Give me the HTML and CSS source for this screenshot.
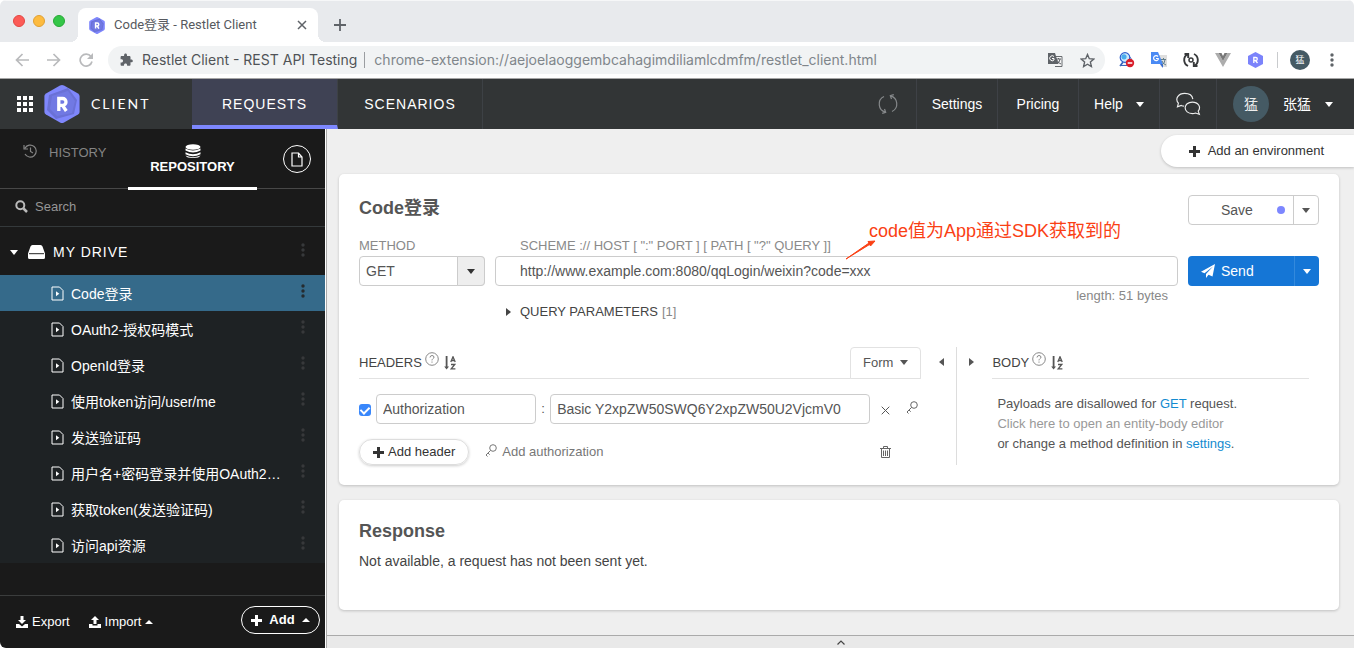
FILE: index.html
```html
<!DOCTYPE html>
<html lang="zh-CN">
<head>
<meta charset="utf-8">
<title>Code登录 - Restlet Client</title>
<link rel="stylesheet" href="styles.css">
</head>
<body>
<svg class="defs" aria-hidden="true">
  <symbol id="plus" viewBox="0 0 11 11"><path d="M4 0h3v4h4v3H7v4H4V7H0V4h4z" fill="currentColor"/></symbol>
  <symbol id="logo" viewBox="0 0 36 38"><path d="M16 .6Q18 -.4 20 .6L34 8.500Q35.600 9.500 35.600 11V27Q35.600 28.500 34 29.500L20 37.400Q18 38.400 16 37.400L2 29.500Q.4 28.500 .4 27V11Q.4 9.500 2 8.500Z" fill="#7f87fc"/><path d="M5 10L24 3L33 15L30 29L12 34L3 25Z" fill="#6a71d6"/><path d="M8 11L24 6L31 16L28 28L13 31L6 24Z" fill="#7179e3"/><path d="M14.800 26V13.500h3.800a3.300 3.300 0 0 1 0 6.800H15M18.500 20.300L22.300 26" fill="none" stroke="#fff" stroke-width="3.300"/></symbol>
  <symbol id="file" viewBox="0 0 13 15"><path d="M1 1h7.500L12 4.500V14H1z" fill="none" stroke="currentColor"/><path d="M5 5.300v5L8.300 7.800z" fill="currentColor"/></symbol>
  <symbol id="dots" viewBox="0 0 4 14"><g fill="currentColor"><circle cx="2" cy="2" r="1.700"/><circle cx="2" cy="7" r="1.700"/><circle cx="2" cy="12" r="1.700"/></g></symbol>
  <symbol id="key" viewBox="0 0 12 13"><g fill="none" stroke="currentColor"><circle cx="8" cy="4" r="3.300"/><path d="M5.600 6.400L1 11l1.500 1.500M3 9l1.700 1.700"/></g></symbol>
  <symbol id="help" viewBox="0 0 14 14"><circle cx="7" cy="7" r="6.300" fill="none" stroke="currentColor"/><path d="M5 5.500q.2-2 2-2t2 1.600c0 1.500-2 1.500-2 3.300M7 9.500v1.200" fill="none" stroke="currentColor"/></symbol>
  <symbol id="sort" viewBox="0 0 12 14"><path d="M1.700 0h1.800v10.500H5L2.600 13.500.2 10.500h1.500z" fill="currentColor"/><path d="M6.800 6L9 .8 11.200 6M7.500 4.500h3M7 8.500h3.800L7.200 12.800h4.200" fill="none" stroke="currentColor" stroke-width="1.300"/></symbol>
  <symbol id="translate" viewBox="0 0 16 16"><path d="M6.500 4.500H15v10H8" fill="#f6f6f6" stroke="#686c70"/><path d="M1 1h7l3.500 11H1z" fill="#5f6368"/><path d="M7 4.500A2.500 2.500 0 1 0 7 8V6.500H5" fill="none" stroke="#fff"/><path d="M9 7h5M11.500 6v1M10 12q3-2 3-5M10.500 8.500Q11 11 14 12" fill="none" stroke="#5f6368"/></symbol>
</svg>

<div class="window">
  <div class="tabstrip">
    <div class="lights"><i class="red"></i><i class="amber"></i><i class="green"></i></div>
    <div class="tab">
      <svg width="16" height="17"><use href="#logo"/></svg>
      <span class="tab-title">Code登录 - Restlet Client</span>
      <button class="icon-btn" aria-label="Close tab"><svg width="10" height="10" viewBox="0 0 10 10"><path d="M1 1l8 8M9 1L1 9" stroke="#5f6368" stroke-width="1.500"/></svg></button>
    </div>
    <button class="icon-btn new-tab" aria-label="New tab"><svg width="12" height="12" viewBox="0 0 12 12"><path d="M6 0v12M0 6h12" stroke="#5f6368" stroke-width="1.800"/></svg></button>
  </div>

  <div class="toolbar">
    <div class="slots">
      <button class="icon-btn slot" aria-label="Back"><svg width="14" height="14" viewBox="0 0 14 14"><path d="M14 7H1.500M7.500 1l-6 6 6 6" fill="none" stroke="#b9babc" stroke-width="1.700"/></svg></button>
      <button class="icon-btn slot" aria-label="Forward"><svg width="14" height="14" viewBox="0 0 14 14"><path d="M0 7h12.500M6.500 1l6 6-6 6" fill="none" stroke="#b9babc" stroke-width="1.700"/></svg></button>
      <button class="icon-btn slot" aria-label="Reload"><svg width="14" height="14" viewBox="0 0 14 14"><path d="M12 3.500A6 6 0 1 0 13 8.500" fill="none" stroke="#b9babc" stroke-width="1.700"/><path d="M14 0v6H8z" fill="#b9babc"/></svg></button>
    </div>
    <div class="omnibox">
      <svg width="14" height="14" viewBox="1 0 24 24"><path d="M20.500 11H19V7c0-1.100-.9-2-2-2h-4V3.500C13 2.120 11.880 1 10.500 1S8 2.120 8 3.500V5H4c-1.100 0-1.990.9-1.990 2v3.800H3.500c1.490 0 2.700 1.210 2.700 2.700s-1.210 2.700-2.700 2.700H2V20c0 1.100.9 2 2 2h3.800v-1.500c0-1.490 1.210-2.700 2.700-2.700s2.700 1.210 2.700 2.700V22H17c1.100 0 2-.9 2-2v-4h1.500c1.380 0 2.500-1.120 2.500-2.500S21.880 11 20.500 11z" fill="#5f6368"/></svg>
      <span class="site">Restlet Client - REST API Testing</span>
      <span class="url">chrome-extension://aejoelaoggembcahagimdiliamlcdmfm/restlet_client.html</span>
      <div class="slots">
        <button class="icon-btn slot" aria-label="Translate page"><svg width="16" height="16"><use href="#translate"/></svg></button>
        <button class="icon-btn slot" aria-label="Bookmark"><svg width="15" height="15" viewBox="0 0 15 15"><path d="M7.500 1.500l1.800 4.200 4.500.4-3.400 3 1 4.400-3.900-2.300-3.900 2.300 1-4.400-3.400-3 4.500-.4z" fill="none" stroke="#5f6368" stroke-width="1.400"/></svg></button>
      </div>
    </div>
    <div class="slots">
      <button class="icon-btn slot" aria-label="Proxy extension"><svg width="16" height="16" viewBox="0 0 16 16"><path d="M8 1.500l4 5v7H2z" fill="#e9f3fb" stroke="#3b66bc"/><circle cx="6" cy="5.500" r="4.800" fill="#cdeafa" stroke="#2f5fd0" stroke-width="1.200"/><circle cx="5" cy="4.800" r="2.600" fill="#4aaced"/><path d="M1 14l3-4" stroke="#3b66bc" stroke-width="1.500"/><circle cx="11" cy="11" r="4.200" fill="#d91d2a"/><path d="M8.700 11h4.600" stroke="#fff" stroke-width="1.500"/></svg></button>
      <button class="icon-btn slot" aria-label="Google Translate"><svg width="17" height="16" viewBox="0 0 17 16"><path d="M6 3h10v12h-6z" fill="#dedede"/><path d="M9 12l3 4 0-4z" fill="#3367d6"/><path d="M0 0h7l5 12H0z" fill="#4a8af4"/><path d="M7 4.500A2.500 2.500 0 1 0 7.200 7.500V6.500H5" fill="none" stroke="#fff" stroke-width="1.200"/><path d="M10 7.500h5M12.500 6v1.500M11 13q3-2 3-5.500M11 9q1 3 4 4" fill="none" stroke="#607d8b"/></svg></button>
      <button class="icon-btn slot" aria-label="Refresh extension"><svg width="16" height="16" viewBox="0 0 16 16"><path d="M5 14A6.600 6.600 0 0 1 4.500 2.300M1.500 2H5.200v4M11 2A6.600 6.600 0 0 1 11.500 13.700M14.500 14h-3.700v-4" fill="none" stroke="#37393b" stroke-width="1.900"/><circle cx="8" cy="8" r="2" fill="none" stroke="#37393b" stroke-width="1.500"/></svg></button>
      <button class="icon-btn slot" aria-label="Vue devtools"><svg width="16" height="14" viewBox="0 0 16 14"><path d="M0 0h3.500L8 8l4.500-8H16L8 14z" fill="#adadad"/><path d="M3.500 0h3L8 3l1.500-3h3L8 8z" fill="#777"/></svg></button>
      <button class="icon-btn slot" aria-label="Restlet Client"><svg width="15" height="16" viewBox="0 0 15 16"><path d="M7.500 0L15 4v8l-7.500 4L0 12V4z" fill="#7b83fb"/><path d="M5.800 11V5.500h2a1.500 1.500 0 0 1 0 3H6M7.500 8.500L9.500 11" fill="none" stroke="#fff" stroke-width="1.300"/></svg></button>
    </div>
    <i class="bar-sep"></i>
    <div class="slots">
      <button class="icon-btn slot" aria-label="Profile"><span class="mini-avatar">猛</span></button>
      <button class="icon-btn slot menu" aria-label="Browser menu"><svg width="4" height="14"><use href="#dots"/></svg></button>
    </div>
  </div>

  <header class="app-header">
    <div class="brand">
      <svg width="16" height="16" viewBox="0 0 16 16"><path d="M0 2h16M0 8h16M0 14h16" stroke="#fff" stroke-width="4" stroke-dasharray="4 2"/></svg>
      <svg width="36" height="38"><use href="#logo"/></svg>
      <span>CLIENT</span>
    </div>
    <nav class="nav"><a class="nav-link active" href="#requests">REQUESTS</a><a class="nav-link" href="#scenarios">SCENARIOS</a></nav>
    <button class="head-item sync" aria-label="Sync"><svg width="20" height="20" viewBox="0 0 20 20"><g fill="none" stroke="#85888a" stroke-width="1.200"><path d="M6 2.500A8.400 8.400 0 0 0 7.500 18.200M4.200 19.300l3.500-1-1.200-3.300M14 17.500A8.400 8.400 0 0 0 12.500 1.800M15.800.7l-3.500 1 1.200 3.300"/></g></svg></button>
    <button class="head-item">Settings</button>
    <button class="head-item">Pricing</button>
    <button class="head-item help">Help<i class="caret"></i></button>
    <button class="head-item chat" aria-label="Chat"><svg width="25" height="24" viewBox="0 0 26 24"><g fill="none" stroke="#eceded" stroke-width="1.200"><path d="M8.500 14.200a10 10 0 0 1-3-.7L1.500 15l1-4C-1.500 6.500 2.500 1 9 1c4.500 0 8 2.300 8.500 6"/><path d="M17 10c-4.500 0-7.500 2.700-7.500 6s3 6 7.500 6c1.200 0 2.400-.2 3.300-.6l4 1.400-1.200-3.300C26.500 15 23 10 17 10z"/></g></svg></button>
    <button class="head-item user"><span class="avatar">猛</span><span>张猛</span><i class="caret"></i></button>
  </header>

  <div class="workspace">
    <aside class="sidebar">
      <div class="side-tabs">
        <button class="side-tab"><svg width="14" height="14" viewBox="0 0 14 14"><path d="M2 4.200A6 6 0 1 1 2 10M1 1v4h4M7.500 3.500v4L10 9" fill="none" stroke="currentColor" stroke-width="1.200"/></svg>HISTORY</button>
        <button class="side-tab active"><svg width="16" height="14" viewBox="0 0 16 14"><g fill="currentColor"><ellipse cx="8" cy="3" rx="7.500" ry="2.800"/><path d="M.5 4.500q7.500 4 15 0v2q-7.500 4-15 0zM.5 8.300q7.500 4 15 0v2q-7.500 4-15 0z"/><path d="M.5 11.500q7.500 3.500 15 0-1 2.500-7.500 2.500T.5 11.500z"/></g></svg>REPOSITORY</button>
        <button class="side-new" aria-label="New request"><svg width="12" height="15" viewBox="0 0 12 15"><path d="M1 1h6.500L11 5v9H1zM7.500 1v4H11" fill="none" stroke="currentColor" stroke-width="1.200"/></svg></button>
      </div>
      <label class="search"><svg width="13" height="13" viewBox="0 0 13 13"><path d="M8.500 8.500L12 12" stroke="#bababa" stroke-width="2.500"/><circle cx="5.300" cy="5.300" r="4" fill="none" stroke="#bababa" stroke-width="2"/></svg><input type="search" placeholder="Search" aria-label="Search"></label>
      <div class="drive"><i class="caret"></i><svg width="17" height="14" viewBox="0 0 17 14"><path d="M4.500 0h8Q14 0 14.500 1.500L17 8.500v4Q17 14 15.500 14h-14Q0 14 0 12.500v-4L2.500 1.500Q3 0 4.500 0z" fill="#fff"/><path d="M1 8.700h15" stroke="#252525" stroke-width="1"/></svg><span>MY DRIVE</span><button class="more" aria-label="Drive options"><svg width="4" height="14"><use href="#dots"/></svg></button></div>
      <ul class="files">
        <li class="selected"><svg width="13" height="15"><use href="#file"/></svg><a href="#r1">Code登录</a><button class="more" aria-label="Options"><svg width="4" height="14"><use href="#dots"/></svg></button></li>
        <li><svg width="13" height="15"><use href="#file"/></svg><a href="#r2">OAuth2-授权码模式</a><button class="more" aria-label="Options"><svg width="4" height="14"><use href="#dots"/></svg></button></li>
        <li><svg width="13" height="15"><use href="#file"/></svg><a href="#r3">OpenId登录</a><button class="more" aria-label="Options"><svg width="4" height="14"><use href="#dots"/></svg></button></li>
        <li><svg width="13" height="15"><use href="#file"/></svg><a href="#r4">使用token访问/user/me</a><button class="more" aria-label="Options"><svg width="4" height="14"><use href="#dots"/></svg></button></li>
        <li><svg width="13" height="15"><use href="#file"/></svg><a href="#r5">发送验证码</a><button class="more" aria-label="Options"><svg width="4" height="14"><use href="#dots"/></svg></button></li>
        <li><svg width="13" height="15"><use href="#file"/></svg><a href="#r6">用户名+密码登录并使用OAuth2…</a><button class="more" aria-label="Options"><svg width="4" height="14"><use href="#dots"/></svg></button></li>
        <li><svg width="13" height="15"><use href="#file"/></svg><a href="#r7">获取token(发送验证码)</a><button class="more" aria-label="Options"><svg width="4" height="14"><use href="#dots"/></svg></button></li>
        <li><svg width="13" height="15"><use href="#file"/></svg><a href="#r8">访问api资源</a><button class="more" aria-label="Options"><svg width="4" height="14"><use href="#dots"/></svg></button></li>
      </ul>
      <div class="side-foot">
        <button class="foot-btn"><svg width="12" height="12" viewBox="0 0 12 12"><path d="M4.500 0h3v4H10L6 8 2 4h2.500zM0 8h3l3 2.500L9 8h3v4H0z" fill="#fff"/></svg>Export</button>
        <button class="foot-btn"><svg width="12" height="12" viewBox="0 0 12 12"><path d="M4.500 8h3V4H10L6 0 2 4h2.500zM0 8h3.500v1.500h5V8H12v4H0z" fill="#fff"/></svg>Import<i class="caret up"></i></button>
        <button class="add-btn"><svg width="11" height="11"><use href="#plus"/></svg>Add<i class="caret up"></i></button>
      </div>
    </aside>

    <main class="main">
      <div class="env-row"><button class="env"><svg width="11" height="11"><use href="#plus"/></svg>Add an environment</button></div>

      <section class="card request">
        <div class="title-row">
          <h1>Code登录</h1>
          <div class="split-btn save"><button class="main-btn">Save<i class="dot"></i></button><button class="drop" aria-label="Save options"><i class="caret"></i></button></div>
        </div>
        <div class="request-grid">
          <div class="field"><label for="method">METHOD</label>
            <div class="select"><select id="method"><option>GET</option></select><span class="select-arrow"><i class="caret"></i></span></div>
          </div>
          <div class="field url-field"><label for="uri">SCHEME :// HOST [ ":" PORT ] [ PATH [ "?" QUERY ]]</label>
            <input id="uri" class="box" type="text" value="http://www.example.com:8080/qqLogin/weixin?code=xxx">
            <div class="note"><svg width="32" height="22" viewBox="0 0 32 22"><path d="M1 21L24 5l-1-1.500L30 3l-4.500 5-1-1.500z" fill="#fa4014" stroke="#fa4014" stroke-width="1"/></svg><span>code值为App通过SDK获取到的</span></div>
          </div>
          <div class="split-btn send"><button class="main-btn"><svg width="14" height="14" viewBox="0 0 14 14"><path d="M14 0l-2.500 12.500-4-1.700L5 14v-4L12 2.500 3.500 9.200 0 7.800z" fill="#fff"/></svg>Send</button><button class="drop" aria-label="Send options"><i class="caret"></i></button></div>
          <div class="url-info">
            <button class="query"><i class="caret right"></i>QUERY PARAMETERS <span>[1]</span></button>
            <span class="length">length: 51 bytes</span>
          </div>
        </div>

        <div class="parts">
          <div class="headers">
            <div class="part-top">
              <div class="part-head"><h2>HEADERS</h2><svg class="help-icon" width="14" height="14"><use href="#help"/></svg><svg width="12" height="14"><use href="#sort"/></svg><button class="form-tab">Form<i class="caret"></i></button></div>
              <button class="fold" aria-label="Collapse headers"><i class="caret left"></i></button>
            </div>
            <div class="header-line">
              <input type="checkbox" checked aria-label="Enable header">
              <input class="box" type="text" value="Authorization" aria-label="Header name"><span class="colon">:</span>
              <input class="box" type="text" value="Basic Y2xpZW50SWQ6Y2xpZW50U2VjcmV0" aria-label="Header value">
              <button class="icon-btn act remove" aria-label="Remove header"><svg width="9" height="9" viewBox="0 0 9 9"><path d="M.7.7l7.600 7.600M8.300.7L.7 8.300" stroke="#555"/></svg></button>
              <button class="icon-btn act key" aria-label="Edit authorization"><svg width="12" height="13"><use href="#key"/></svg></button>
            </div>
            <div class="header-actions">
              <button class="add-header"><svg width="11" height="11"><use href="#plus"/></svg>Add header</button>
              <button class="add-auth"><svg width="12" height="13"><use href="#key"/></svg>Add authorization</button>
              <button class="icon-btn act trash" aria-label="Delete all headers"><svg width="11" height="12" viewBox="0 0 11 12"><path d="M0 2.500h11M3.500 2.500v-2h4v2M1.500 3v8.500h8V3M3.500 4.500v5.500M5.500 4.500v5.500M7.500 4.500v5.500" fill="none" stroke="#666"/></svg></button>
            </div>
          </div>
          <div class="body-part">
            <button class="fold" aria-label="Collapse body"><i class="caret right"></i></button>
            <div class="body-main">
              <div class="part-head"><h2>BODY</h2><svg class="help-icon" width="14" height="14"><use href="#help"/></svg><svg width="12" height="14"><use href="#sort"/></svg></div>
              <p>Payloads are disallowed for <a href="#get">GET</a> request.<br><span>Click here to open an entity-body editor</span><br>or change a method definition in <a href="#settings">settings</a>.</p>
            </div>
          </div>
        </div>
      </section>

      <section class="card response"><h1>Response</h1><p>Not available, a request has not been sent yet.</p></section>
      <button class="drawer" aria-label="Open bottom panel"><svg width="8" height="5" viewBox="0 0 8 5"><path d="M.5 4.500L4 1l3.500 3.500" fill="none" stroke="#444" stroke-width="1.200"/></svg></button>
    </main>
  </div>
</div>
</body>
</html>
```
FILE: styles.css
```css
* { box-sizing: border-box; }

body {
  margin: 0;
  background: #fff;
  color: #555;
  font: 13px/20px "Liberation Sans", "Noto Sans CJK SC", sans-serif;
}

button, input, select { font: inherit; color: inherit; }
button { margin: 0; padding: 0; border: 0; background: none; }
a { color: inherit; text-decoration: none; }
h1, h2, p, ul { margin: 0; padding: 0; }
svg { display: block; flex: none; }
.defs { position: absolute; width: 0; height: 0; }

.window {
  display: flex;
  flex-direction: column;
  min-height: 100vh;
  border-radius: 6px 6px 0 6px;
  overflow: hidden;
}

.caret {
  flex: none;
  border: 4px solid transparent;
  border-top: 5px solid currentColor;
  border-bottom: 0;
}
.caret.up { border-top: 0; border-bottom: 4px solid currentColor; }
.caret.right { border: 4px solid transparent; border-left: 5px solid currentColor; border-right: 0; }
.caret.left { border: 4px solid transparent; border-right: 5px solid currentColor; border-left: 0; }

.icon-btn { display: flex; align-items: center; justify-content: center; }

/* Browser chrome */
.tabstrip {
  display: flex;
  align-items: flex-end;
  height: 42px;
  padding-left: 13px;
  background: #e8eaed;
  border-top: 1px solid #f6f7f8;
  font-family: Roboto, "Noto Sans CJK SC", sans-serif;
}
.lights { display: flex; gap: 8px; width: 65px; padding-bottom: 15px; }
.lights i { width: 12px; height: 12px; border-radius: 50%; }
.red { background: #fc5b57; border: 1px solid #e34642; }
.amber { background: #fdbb3f; border: 1px solid #e0a033; }
.green { background: #34c648; border: 1px solid #27a936; }
.tab {
  position: relative;
  display: flex;
  align-items: center;
  gap: 9px;
  width: 240px;
  height: 34px;
  padding: 0 11px;
  background: #fff;
  border-radius: 8px 8px 0 0;
}
.tab::before, .tab::after {
  content: "";
  position: absolute;
  bottom: 0;
  width: 8px;
  height: 8px;
}
.tab::before { left: -8px; background: radial-gradient(circle at 0 0, transparent 8px, #fff 8px); }
.tab::after { right: -8px; background: radial-gradient(circle at 100% 0, transparent 8px, #fff 8px); }
.tab-title { flex: 1; color: #56595e; white-space: nowrap; }
.new-tab { width: 44px; height: 34px; }

.toolbar {
  display: flex;
  align-items: center;
  gap: 6px;
  height: 37px;
  padding: 0 6px;
  border-bottom: 1px solid #a5a5a5;
  background: #fff;
}
.slots { display: flex; }
.slot { width: 32px; height: 28px; }
.omnibox {
  display: flex;
  flex: 1;
  align-items: center;
  min-width: 0;
  height: 28px;
  padding: 0 2px 0 12px;
  border-radius: 14px;
  background: #f1f3f4;
  font: 14px/20px Inter, sans-serif;
  white-space: nowrap;
}
.site { margin-left: 8px; padding-right: 7px; border-right: 1px solid #9a9da1; color: #505357; line-height: 16px; }
.url { flex: 1; min-width: 0; padding-left: 9px; overflow: hidden; color: #80868b; }
.bar-sep { width: 1px; height: 16px; background: #c9cbcd; }
.menu { color: #5f6368; }
.mini-avatar {
  width: 20px;
  height: 20px;
  border-radius: 50%;
  background: #455a64;
  color: #fff;
  font-size: 9px;
  line-height: 20px;
}

/* Application header */
.app-header {
  display: flex;
  height: 50px;
  background: #323536;
  color: #fff;
  font-size: 14px;
}
.brand { display: flex; align-items: center; width: 192px; padding-left: 17px; gap: 11px; }
.brand span { font: 14px/20px Lato, sans-serif; letter-spacing: 2px; }
.nav { display: flex; flex: 1; }
.nav-link {
  width: 145px;
  border-right: 1px solid #3d4145;
  letter-spacing: 1px;
  line-height: 50px;
  text-align: center;
}
.nav-link.active { width: 146px; background: #3f4254; border-bottom: 4px solid #7d87ff; }
.head-item {
  display: flex;
  align-items: center;
  justify-content: center;
  width: 81px;
  border-left: 1px solid #3e4146;
}
.help { gap: 13px; }
.chat { width: 57px; }
.sync { width: 57px; border-left: 0; }
.user { justify-content: flex-start; width: 138px; gap: 14px; padding-left: 16px; }
.avatar { width: 36px; height: 36px; border-radius: 50%; background: #455a64; color: #eee; line-height: 36px; }

/* Sidebar */
.workspace { display: flex; flex: 1; min-height: 519px; }
.sidebar {
  display: flex;
  flex-direction: column;
  width: 325px;
  background: #1a1a1a;
  color: #fff;
}
.side-tabs { display: flex; height: 60px; border-bottom: 1px solid #484848; }
.side-tab {
  display: flex;
  align-items: flex-start;
  gap: 12px;
  width: 128px;
  padding: 14px 0 0 23px;
  color: #848484;
  height: 60px;
}
.side-tab svg { margin-top: 1px; }
.side-tab.active {
  flex-direction: column;
  align-items: center;
  gap: 0;
  width: 129px;
  height: 61px;
  padding: 14px 0 0;
  border-bottom: 3px solid #fff;
  color: #fff;
  font-weight: bold;
  line-height: 18px;
}
.side-new {
  display: flex;
  align-items: center;
  justify-content: center;
  width: 28px;
  height: 28px;
  margin: 16px 0 0 26px;
  border: 1px solid #fff;
  border-radius: 50%;
}
.search {
  display: flex;
  align-items: center;
  gap: 7px;
  height: 38px;
  padding: 0 15px 2px;
  border-bottom: 1px solid #34393b;
}
.search input { flex: 1; min-width: 0; padding: 0; border: 0; outline: 0; background: none; }
.search input::placeholder { color: #969696; opacity: 1; }
.drive {
  display: flex;
  align-items: center;
  gap: 10px;
  height: 48px;
  padding: 2px 20px 0 10px;
  font-size: 14px;
  letter-spacing: 1px;
}
.drive span { flex: 1; }
.drive > svg { margin-right: -2px; }
.more { margin-bottom: 4px; color: #37393b; }
.files { list-style: none; background: #1e2224; font-size: 14px; }
.files li { display: flex; align-items: center; gap: 7px; height: 36px; padding: 0 20px 0 51px; }
.files a {
  flex: 1;
  min-width: 0;
  padding-top: 2px;
  overflow: hidden;
  text-overflow: ellipsis;
  white-space: nowrap;
}
.files .selected { background: #356a8a; }
.files .selected .more { color: #252b2f; }
.side-foot {
  display: flex;
  align-items: center;
  gap: 19px;
  height: 53px;
  margin-top: auto;
  padding: 0 5px 4px 16px;
  border-top: 1px solid #3b3d3d;
}
.foot-btn { display: flex; align-items: center; gap: 4px; padding-top: 3px; }
.add-btn {
  display: flex;
  align-items: center;
  justify-content: center;
  gap: 7px;
  width: 79px;
  height: 28px;
  margin-left: auto;
  border: 1px solid #fff;
  border-radius: 14px;
  font-weight: bold;
}

/* Main area */
.main {
  display: flex;
  flex: 1;
  flex-direction: column;
  min-width: 0;
  margin-left: 1px;
  border-left: 1px solid #a9a9a9;
  background: #efefef;
}
.env-row { display: flex; justify-content: flex-end; padding: 6px 0 7px; }
.env {
  display: flex;
  align-items: center;
  gap: 8px;
  height: 32px;
  padding: 0 30px 0 28px;
  border-radius: 16px 0 0 16px;
  background: #fff;
  box-shadow: 0 1px 3px rgba(0, 0, 0, .2);
  color: #333;
}
.card {
  margin: 0 15px 15px 12px;
  padding: 20px;
  border-radius: 5px;
  background: #fff;
  box-shadow: 0 1px 3px rgba(0, 0, 0, .2);
}
h1 { color: #555; font-size: 18px; line-height: 24px; }
.title-row { display: flex; justify-content: space-between; height: 42px; padding-top: 1px; }
.title-row h1 { padding-top: 1px; }
.split-btn { display: flex; width: 131px; height: 30px; border-radius: 4px; }
.main-btn { flex: 1; display: flex; align-items: center; font-size: 14px; }
.drop { display: flex; align-items: center; justify-content: center; width: 25px; }
.save { border: 1px solid #ccc; }
.save .main-btn { justify-content: space-between; padding: 0 8px 0 32px; }
.save .drop { border-left: 1px solid #ccc; }
.dot { width: 8px; height: 8px; border-radius: 50%; background: #7d87ff; }
.request-grid {
  display: grid;
  grid-template-columns: 126px minmax(0, 1fr) 131px;
  column-gap: 10px;
}
.field label { display: block; color: #8a8a8a; line-height: 20px; }
.url-field { position: relative; }
.url-field label { padding-left: 25px; }
.select { display: grid; height: 30px; }
.select select, .select-arrow { grid-area: 1 / 1; }
.select select {
  appearance: none;
  padding: 0 6px;
  border: 1px solid #ccc;
  border-radius: 4px;
  background: #fff;
  font-size: 14px;
}
.select-arrow {
  display: flex;
  align-items: center;
  justify-content: center;
  justify-self: end;
  width: 28px;
  border: 1px solid #ccc;
  border-radius: 0 4px 4px 0;
  background: #eee;
  color: #333;
  pointer-events: none;
}
.box {
  width: 100%;
  min-width: 0;
  height: 30px;
  padding: 0 6px;
  border: 1px solid #ccc;
  border-radius: 4px;
  background: #fff;
  font-size: 14px;
}
.url-field .box { display: block; padding-left: 24px; }
.note {
  position: absolute;
  left: 350px;
  bottom: 26px;
  display: flex;
  align-items: flex-end;
  color: #fa4014;
  font-size: 18px;
  line-height: 24px;
  white-space: nowrap;
}
.note span { margin: 0 0 17px -8px; }
.send { align-self: end; background: #1576d6; color: #fff; }
.send .main-btn { gap: 6px; padding-left: 13px; }
.send .drop { border-left: 1px solid #3389dc; }
.url-info { grid-column: 2; display: flex; justify-content: space-between; padding: 0 10px 0 11px; }
.query { display: flex; align-items: center; gap: 9px; padding-top: 16px; color: #444; }
.query span { margin-left: -5px; color: #888; }
.length { color: #888; }

.parts { display: flex; margin-top: 25px; }
.headers { flex: 598; min-width: 0; border-right: 1px solid #ddd; }
.part-top { display: flex; }
.part-head { display: flex; flex: 1; align-items: center; height: 32px; border-bottom: 1px solid #e2e2e2; }
h2 { color: #444; font-size: 13px; font-weight: normal; line-height: 20px; }
.help-icon { margin: 0 5px 8px 3px; color: #888; }
.form-tab {
  display: flex;
  align-items: center;
  gap: 7px;
  height: 32px;
  margin-left: auto;
  padding: 0 12px;
  border: 1px solid #e2e2e2;
  border-radius: 4px 4px 0 0;
  background: #fff;
}
.fold { display: flex; align-items: center; justify-content: center; width: 35px; height: 30px; }
.part-top .fold { padding-left: 6px; }
.body-part .fold { padding-right: 6px; }
.header-line {
  display: grid;
  grid-template-columns: 17px minmax(0, 1fr) 14px minmax(0, 2fr) 30px 56px;
  align-items: center;
  margin-top: 15px;
}
.header-line input[type="checkbox"] {
  appearance: none;
  display: grid;
  place-items: center;
  width: 12px;
  height: 12px;
  margin: 2px 0 0;
  border-radius: 3px;
  background: #3987fb;
}
.header-line input:checked::before {
  content: "";
  width: 4px;
  height: 7px;
  margin-bottom: 2px;
  border: solid #fff;
  border-width: 0 2px 2px 0;
  rotate: 45deg;
}
.colon { text-align: center; }
.act { width: 30px; height: 26px; }
.remove { padding-top: 3px; }
.key { width: 24px; padding: 0 1px 3px 0; color: #666; }
.header-actions { display: flex; align-items: center; margin-top: 15px; padding-right: 56px; }
.add-header {
  display: flex;
  align-items: center;
  gap: 4px;
  height: 26px;
  padding: 0 13px;
  border: 1px solid #ddd;
  border-radius: 13px;
  box-shadow: 0 1px 3px rgba(0, 0, 0, .2);
  color: #333;
}
.add-auth { display: flex; align-items: center; gap: 5px; margin-left: 16px; color: #777; }
.add-auth svg { margin-bottom: 3px; }
.trash { margin-left: auto; }
.body-part { display: flex; flex: 362; min-width: 0; }
.body-main { flex: 1; min-width: 0; margin-right: 10px; }
.body-main p { padding: 15px 5px 0; white-space: nowrap; }
.body-main p span { color: #999; }
.body-main p a { color: #148bd0; }

.response { min-height: 110px; padding: 19px 20px; }
.response p { margin-top: 8px; color: #444; font-size: 14px; }
.drawer {
  display: flex;
  align-items: center;
  justify-content: center;
  height: 13px;
  margin-top: auto;
  border-top: 1px solid #aaa;
  background: #e9e9e9;
}
```
